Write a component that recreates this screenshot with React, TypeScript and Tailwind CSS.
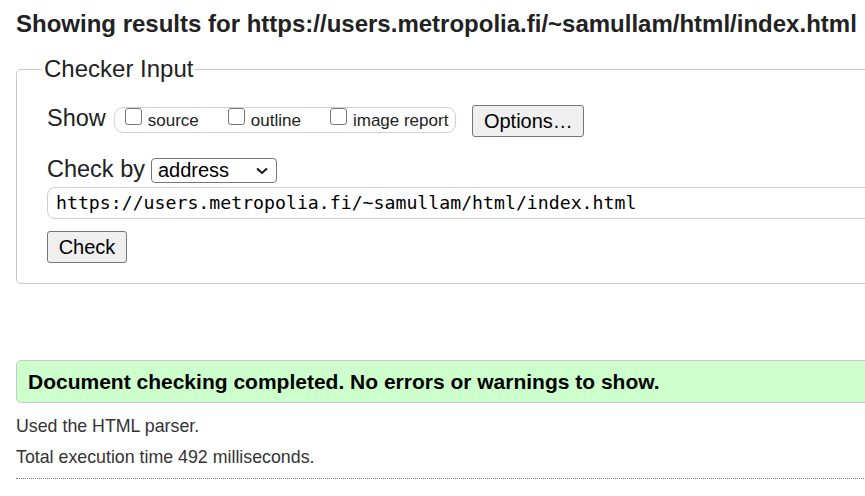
import React from "react";

const checks = ["source", "outline", "image report"];

function Box() {
  return <span className="block w-[17px] h-[17px] shrink-0 rounded-[3px] border border-[#767676] bg-white" />;
}

export default function App() {
  return (
    <div className="w-screen h-screen overflow-hidden bg-white font-['Liberation_Sans',Arial,sans-serif] text-[#222]">
      <div className="w-[1100px] px-[16px]">
        <h2 className="mt-[10px] text-[24px] leading-[28px] font-bold">
          Showing results for https://users.metropolia.fi/~samullam/html/index.html
        </h2>

        {/* Checker input form */}
        <fieldset className="mt-[17px] border border-[#c8c8c8] rounded-[5px] pl-[25px] pt-[22px] pb-[20px]">
          <legend className="px-[2px] text-[24px] leading-[28px]">Checker Input</legend>
          <div className="pl-[5px]">
            <div className="flex items-start">
              <span className="text-[23.5px] leading-[26px]">Show</span>
              <div className="ml-[8px] mt-[2px] h-[26px] flex items-start border border-[#cfcfcf] rounded-[9px] pl-[10px] pr-[7px]">
                {checks.map((c, i) => (
                  <label key={c} className={"flex items-start " + (i > 0 ? "ml-[29px]" : "")}>
                    <Box />
                    <span className="ml-[6px] mt-[3px] text-[17px] leading-[20px] text-[#222]">{c}</span>
                  </label>
                ))}
              </div>
              <button className="ml-[16px] w-[112px] h-[32px] bg-[#efefef] border border-[#767676] rounded-[3px] text-[20px] leading-[30px] text-black">
                Options…
              </button>
            </div>

            <div className="mt-[19px] flex items-start">
              <span className="text-[23.5px] leading-[26px]">Check by</span>
              <div className="ml-[6px] mt-[2px] w-[126px] h-[25px] border border-[#767676] rounded-[4px] flex items-center justify-between pl-[6px] pr-[8px]">
                <span className="text-[20px] leading-[23px] text-black">address</span>
                <svg width="12" height="8" viewBox="0 0 12 8" className="mt-[1px]">
                  <polyline points="1,1.5 6,6 11,1.5" fill="none" stroke="#111" strokeWidth="2" />
                </svg>
              </div>
            </div>

            <div className="mt-[4px] h-[32px] border border-[#cfcfcf] rounded-[8px] pl-[8px] font-['DejaVu_Sans_Mono',monospace] text-[18.2px] leading-[30px] text-black">
              https://users.metropolia.fi/~samullam/html/index.html
            </div>

            <button className="mt-[12px] block w-[80px] h-[32px] bg-[#efefef] border border-[#767676] rounded-[3px] text-[20px] leading-[30px] text-black">
              Check
            </button>
          </div>
        </fieldset>

        {/* Results */}
        <div className="mt-[76px] border border-[#c8c8c8] rounded-[5px] bg-[#ccffcc] pl-[11px] pt-[9px] pb-[8px]">
          <p className="text-[21px] leading-[24px] font-bold text-black">
            Document checking completed. No errors or warnings to show.
          </p>
        </div>
        <p className="mt-[11px] text-[17.8px] leading-[24px] text-[#333]">Used the HTML parser.</p>
        <p className="mt-[7px] text-[17.8px] leading-[24px] text-[#333]">Total execution time 492 milliseconds.</p>
        <div className="mt-[9px] border-t border-dotted border-[#777]" />
      </div>
    </div>
  );
}
